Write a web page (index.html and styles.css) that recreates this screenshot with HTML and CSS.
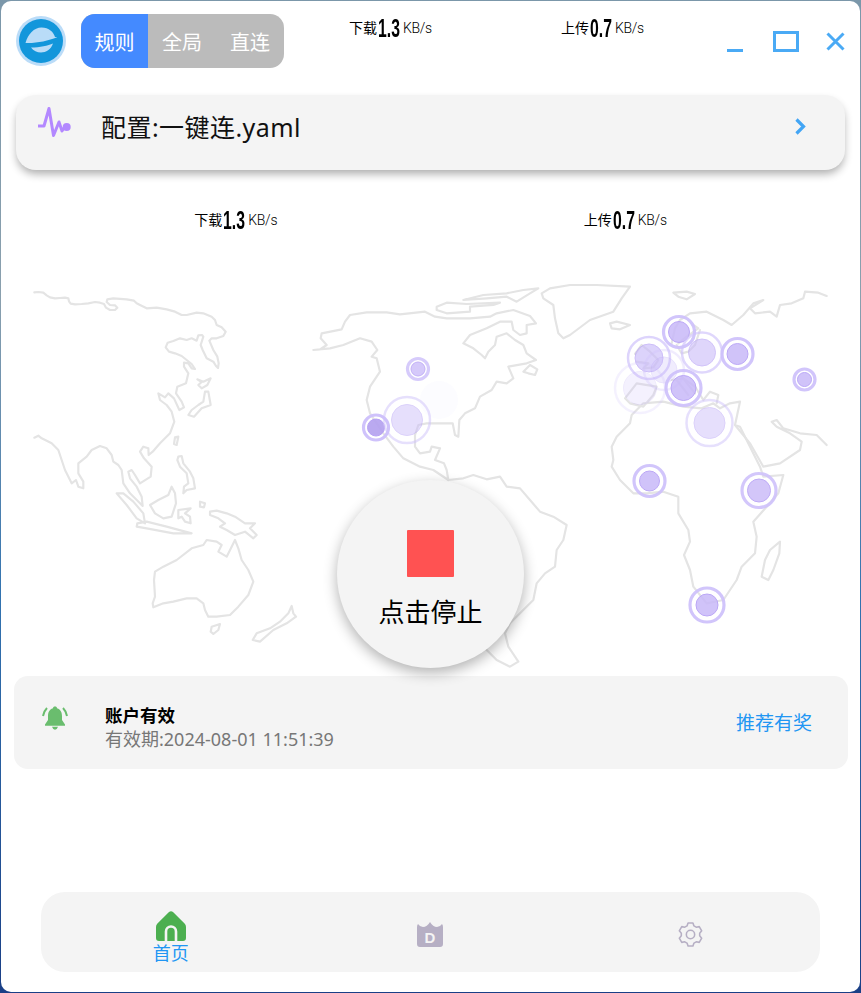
FILE: index.html
```html
<!DOCTYPE html>
<html lang="zh-CN">
<head>
<meta charset="utf-8">
<title>一键连</title>
<link rel="stylesheet" href="styles.css">
</head>
<body>
<div class="window">
  <header class="titlebar">
    <svg class="logo" viewBox="0 0 50 50">
      <circle cx="25" cy="25" r="25" fill="#bbdcf8"/>
      <circle cx="25" cy="25" r="22" fill="#1296db"/>
      <path d="M9.500 27 C12 18 18 11.500 25.500 11.500 C33 11.500 37.500 16 39 21 C41 20.800 41 21 41 21.300 C32 25 20 27.500 9.500 27Z" fill="#b9dcf8"/>
      <path d="M15 31.500 C24 31.500 32 29.500 37 27.500 C35 33.500 30 36.500 25 36.500 C21 36.500 17.500 35 15 31.500Z" fill="#b9dcf8"/>
    </svg>
    <div class="segment">
      <span class="seg seg-on">规则</span>
      <span class="seg">全局</span>
      <span class="seg">直连</span>
    </div>
    <div class="top-speeds">
      <div class="speed"><span class="sp-label">下载</span><b class="sp-num">1.3</b><span class="sp-unit">KB/s</span></div>
      <div class="speed"><span class="sp-label">上传</span><b class="sp-num">0.7</b><span class="sp-unit">KB/s</span></div>
    </div>
    <div class="win-controls">
      <svg class="win-min" viewBox="0 0 16 3"><rect width="16" height="3" fill="#4aaaf5"/></svg>
      <svg class="win-max" viewBox="0 0 26 21"><rect x="1.500" y="1.500" width="23" height="18" fill="none" stroke="#4aaaf5" stroke-width="3"/></svg>
      <svg class="win-close" viewBox="0 0 19 19"><path d="M1.500 1.500 L17.500 17.500 M17.500 1.500 L1.500 17.500" stroke="#4aaaf5" stroke-width="3" fill="none"/></svg>
    </div>
  </header>

  <section class="config">
    <svg class="pulse" viewBox="0 0 33 30">
      <path d="M0 19 H6 L11 1.500 L15.500 28.500 L21 15 L24 24 L27 19.500" fill="none" stroke="#b388ff" stroke-width="3" stroke-linejoin="round" stroke-linecap="round"/>
      <circle cx="28.700" cy="20" r="4" fill="#b388ff"/>
    </svg>
    <span class="config-name">配置:一键连.yaml</span>
    <svg class="chevron" viewBox="0 0 11 17"><path d="M1.500 1.500 L8.500 8.500 L1.500 15.500" fill="none" stroke="#42a5f5" stroke-width="3.200"/></svg>
  </section>

  <div class="speeds">
    <div class="speed"><span class="sp-label">下载</span><b class="sp-num">1.3</b><span class="sp-unit">KB/s</span></div>
    <div class="speed"><span class="sp-label">上传</span><b class="sp-num">0.7</b><span class="sp-unit">KB/s</span></div>
  </div>

  <div class="stage">
    <svg class="map" viewBox="1 270 859 400">
      <g class="land" transform="translate(0 270) scale(.33333)">
        <path d="M103 67 L115 66 L130 68 L140 76 L150 82 L165 85 L180 84 L195 83 L205 85 L207 94 L212 101 L225 103 L245 102 L265 100 L285 96 L300 98 L312 102 L318 113 L330 120 L345 120 L352 113 L345 106 L330 105 L320 96 L322 88 L340 85 L380 88 L402 92 L410 100 L420 105 L440 115 L470 113 L500 118 L525 125 L545 135 L560 135 L590 128 L610 130 L635 140 L645 150 L650 165 L665 172 L677 185 L670 198 L650 205 L635 205 L628 212 L640 240 L652 260 L656 280 L654 294 L648 288 L640 275 L620 265 L608 240 L602 225 L610 200 L606 195 L595 196 L590 212 L575 205 L560 210 L540 205 L520 213 L503 218 L497 232 L507 245 L525 250 L545 258 L560 270 L575 282 L585 297 L575 295 L565 280 L552 278 L552 290 L565 310 L558 340 L532 350 L528 370 L545 395 L552 412 L538 420 L522 385 L505 370 L495 382 L475 370 L480 390 L500 405 L515 425 L523 455 L510 490 L480 520 L458 545 L446 555 L445 535 L430 530 L420 545 L432 565 L455 590 L452 620 L420 640 L405 615 L395 600 L385 605 L390 625 L410 650 L425 680 L428 708 L420 700 L390 670 L370 640 L365 600 L355 585 L340 575 L335 555 L320 535 L300 528 L275 540 L260 560 L235 580 L235 610 L250 635 L250 655 L235 650 L228 630 L215 640 L195 600 L175 540 L155 520 L125 505 L115 497 L103 503"/>
        <path d="M592 328 L610 335 L632 325 L622 345 L605 355 L595 345 L605 336Z"/>
        <path d="M615 365 L625 365 L632 405 L605 415 L582 440 L565 435 L575 420 L595 405 L610 395Z"/>
        <path d="M525 502 L535 500 L530 525 L522 522Z"/>
        <path d="M535 560 L545 558 L550 580 L570 605 L580 625 L585 655 L560 660 L550 670 L552 650 L565 640 L560 610 L540 590 L532 570Z"/>
        <path d="M515 650 L525 670 L528 700 L515 740 L490 745 L465 730 L450 705 L475 690 L505 675Z"/>
        <path d="M535 720 L572 715 L555 730 L570 740 L572 760 L555 755 L545 740 L535 745Z"/>
        <path d="M600 695 L615 700 L612 712 L600 710Z"/>
        <path d="M350 670 L370 670 L400 695 L430 730 L435 760 L410 745 L380 705Z"/>
        <path d="M412 760 L440 755 L500 770 L575 790 L520 790 L440 775 L410 770Z"/>
        <path d="M630 725 L650 722 L680 730 L705 740 L735 760 L765 760 L750 775 L770 795 L760 805 L735 785 L705 795 L680 780 L660 770 L675 760 L655 745 L630 735Z"/>
        <path d="M465 905 L490 890 L530 870 L575 835 L610 825 L620 810 L650 815 L665 825 L655 845 L680 860 L695 830 L705 810 L715 835 L725 870 L745 900 L760 935 L745 975 L715 1010 L690 1035 L650 1040 L625 1040 L615 1020 L610 1000 L590 985 L560 985 L520 995 L490 1000 L460 1012 L458 1000 L465 980 L462 930Z"/>
        <path d="M635 1070 L660 1062 L655 1080 L640 1092 L632 1085Z"/>
        <path d="M875 1008 L880 1030 L888 1040 L860 1060 L820 1080 L780 1115 L758 1110 L770 1090 L810 1075 L840 1055 L865 1030Z"/>
      </g>
      <g class="land" transform="translate(300 280) scale(.33333)">
        <path d="M445 600 L440 570 L432 550 L405 540 L420 505 L395 500 L390 515 L360 520 L345 500 L345 465 L355 435 L380 430 L420 430 L458 430 L465 465 L475 470 L478 420 L495 400 L525 385 L540 350 L575 330 L590 305 L620 310 L640 295 L625 260 L680 250 L708 240 L680 220 L670 195 L645 180 L620 160 L590 170 L585 195 L565 215 L555 235 L545 225 L520 205 L490 190 L510 165 L560 145 L600 125 L635 125 L640 150 L660 165 L680 160 L680 135 L708 130 L690 108 L640 90 L590 100 L570 110 L510 115 L440 115 L405 110 L375 95 L300 103 L260 97 L200 97 L150 105 L135 125 L125 148 L65 160 L62 175 L80 195 L60 208 L40 210 L90 205 L130 195 L180 175 L215 185 L232 210 L215 230 L230 235 L240 275 L210 320 L200 360 L210 400 L250 460 L280 500 L310 535 L360 560 L400 570 L445 600"/>
        <path d="M490 60 L550 45 L620 40 L670 30 L715 25 L690 40 L650 65 L620 50 L560 55Z"/>
        <path d="M410 80 L440 68 L500 72 L600 68 L580 75 L510 80 L510 95 L440 100 L410 90Z"/>
        <path d="M670 275 L690 255 L712 268 L705 285 L685 280Z"/>
      </g>
      <g class="land" transform="translate(430 270) scale(.33333)">
        <path d="M54 630 L100 625 L130 615 L170 628 L210 620 L230 650 L270 655 L300 690 L330 725 L370 740 L410 765 L400 810 L380 840 L375 890 L345 910 L320 940 L310 990 L270 1030 L240 1060 L225 1090 L235 1130 L265 1175 L240 1190 L200 1170 L170 1140"/>
        <path d="M335 70 L360 55 L420 45 L500 45 L600 50 L575 85 L550 125 L480 150 L420 195 L400 205 L385 190 L375 145 L370 105 L340 85Z"/>
        <path d="M540 160 L560 155 L600 165 L570 178 L545 175Z"/>
        <path d="M730 68 L770 65 L795 72 L770 88 L745 80Z"/>
        <path d="M1050 815 L1048 850 L1030 900 L1015 930 L995 920 L1005 870 L1020 840Z"/>
        <path d="M605 435 L600 460 L560 500 L545 530 L550 570 L545 590 L570 630 L610 670 L650 670 L700 665 L745 680 L745 730 L775 780 L780 815 L762 855 L780 900 L790 950 L830 1000 L880 990 L920 930 L935 890 L975 850 L980 800 L970 755 L1010 710 L1045 670 L1060 615 L1000 620 L990 590 L960 530 L930 470 L915 465 L930 395 L900 400 L870 415 L850 400 L815 415 L760 410 L700 395 L640 400 L605 435"/>
        <path d="M915 465 L960 520 L1000 590 L1050 580 L1110 540 L1115 515 L1080 490 L1040 470 L1025 455 L1040 450 L1060 475 L1110 490 L1160 495 L1190 525"/>
        <path d="M1190 78 L1165 68 L1125 65 L1120 85 L1085 100 L1050 105 L1040 140 L1020 125 L975 130 L960 115 L1000 90 L970 100 L940 135 L905 165 L880 150 L830 125 L780 130 L750 150 L735 175 L725 220"/>
        <path d="M745 220 L770 200 L805 175 L790 165"/>
      </g>
      <g class="land" transform="translate(600 280) scale(.33333)">
        <path d="M105 222 L125 195 L150 215 L175 240 L160 262 L130 265 L145 250 L110 245"/>
        <path d="M75 355 L110 310 L170 320 L160 345 L130 380 L90 370Z"/>
        <path d="M215 300 L250 295 L285 320 L310 360 L330 335 L355 345 L350 370"/>
        <path d="M230 195 L245 220 L265 215 L285 195 L300 150"/>
        <path d="M230 300 L265 345 M245 290 L285 340"/>
      </g>
      <g class="pin">
        <circle class="halo" cx="439" cy="400" r="19" opacity=".02"/>
        <g opacity=".95"><circle class="ring thick" cx="679" cy="332" r="15.500"/><circle class="dot" cx="679" cy="332" r="10.500"/></g>
        <g opacity=".65"><circle class="ring" cx="702" cy="352.500" r="20"/><circle class="dot" cx="702" cy="352.500" r="13.500"/></g>
        <g opacity=".95"><circle class="ring thick" cx="737.500" cy="354" r="15.500"/><circle class="dot" cx="737.500" cy="354" r="10.500"/></g>
        <g opacity=".95"><circle class="ring thick" cx="804.500" cy="379.500" r="10.500"/><circle class="dot" cx="804.500" cy="379.500" r="7"/></g>
        <g opacity=".7"><circle class="ring" cx="649" cy="358" r="21"/><circle class="dot" cx="649" cy="358" r="14"/></g>
        <g opacity=".3"><circle class="ring" cx="664" cy="370" r="20"/><circle class="dot" cx="664" cy="370" r="13"/></g>
        <g opacity=".95"><circle class="ring thick" cx="683.500" cy="388" r="17.500"/><circle class="dot" cx="683.500" cy="388" r="12.500"/></g>
        <g opacity=".22"><circle class="ring" cx="640" cy="388" r="25"/><circle class="dot" cx="640" cy="388" r="16.500"/></g>
        <g opacity=".5"><circle class="ring" cx="709.500" cy="423" r="23"/><circle class="dot" cx="709.500" cy="423" r="15.500"/></g>
        <g opacity=".95"><circle class="ring thick" cx="649.500" cy="481" r="15.500"/><circle class="dot" cx="649.500" cy="481" r="10"/></g>
        <g opacity=".9"><circle class="ring thick" cx="759" cy="490.500" r="17"/><circle class="dot" cx="759" cy="490.500" r="11.500"/></g>
        <g opacity=".95"><circle class="ring thick" cx="707" cy="605" r="17"/><circle class="dot" cx="707" cy="605" r="11"/></g>
        <g opacity=".85"><circle class="ring thick" cx="418" cy="369" r="10.500"/><circle class="dot" cx="418" cy="369" r="7"/></g>
        <g><circle class="ring thick" cx="376" cy="427.500" r="12.500"/><circle class="dot deep" cx="376" cy="427.500" r="8.500"/></g>
        <g opacity=".5"><circle class="ring" cx="407" cy="420" r="23"/><circle class="dot" cx="407" cy="420" r="15.500"/></g>
      </g>
    </svg>
    <div class="stop">
      <span class="stop-square"></span>
      <span class="stop-label">点击停止</span>
    </div>
  </div>

  <section class="account">
    <svg class="bell" viewBox="0 0 26 25">
      <path d="M13 .5 C14.300 .5 15 1.200 15 2.200 C19 3.500 20 7 20 10 V14 L23 18.500 V19.800 H3 V18.500 L6 14 V10 C6 7 7 3.500 11 2.200 C11 1.200 11.700 .5 13 .5Z" fill="#6abd6e"/>
      <path d="M10 20.800 H16 Q15 23.800 13 23.800 Q11 23.800 10 20.800Z" fill="#6abd6e"/>
      <path d="M1 10 Q2 5 5 2 M25 10 Q24 5 21 2" fill="none" stroke="#6abd6e" stroke-width="2"/>
    </svg>
    <div class="account-text">
      <div class="account-title">账户有效</div>
      <div class="account-date">有效期:2024-08-01 11:51:39</div>
    </div>
    <span class="invite">推荐有奖</span>
  </section>

  <nav class="tabs">
    <div class="tab">
      <svg class="home" viewBox="0 0 30 30">
        <path d="M13 1 L1.200 12.800 Q0 14 0 16 V27 Q0 30 3 30 H27 Q30 30 30 27 V16 Q30 14 28.800 12.800 L17 1 Q15 -.6 13 1Z" fill="#4caf50"/>
        <path d="M10 30 V20.500 A5 5 0 0 1 20 20.500 V30" fill="none" stroke="#f4f4f4" stroke-width="2.600"/>
      </svg>
      <span class="tab-label">首页</span>
    </div>
    <div class="tab">
      <svg class="crown" viewBox="0 0 26 25">
        <path d="M1 2 Q3 5 6 5 Q10 5 13 0 Q16 5 20 5 Q23 5 25 2 Q26 3 26 5 V22 Q26 25 23 25 H3 Q0 25 0 22 V5 Q0 3 1 2Z" fill="#b6afc4"/>
        <text class="crown-d" x="13" y="21" text-anchor="middle">D</text>
      </svg>
    </div>
    <div class="tab">
      <svg class="gear" viewBox="0 0 24 24">
        <path d="M8.670 3.750 L9.650 .95 H14.350 L15.330 3.750 L17.480 4.990 L20.400 4.440 L22.750 8.510 L20.810 10.760 V13.240 L22.750 15.490 L20.400 19.560 L17.480 19.010 L15.330 20.250 L14.350 23.050 H9.650 L8.670 20.250 L6.520 19.010 L3.600 19.560 L1.250 15.490 L3.190 13.240 V10.760 L1.250 8.510 L3.600 4.440 L6.520 4.990Z" fill="none" stroke="#b6afc4" stroke-width="1.500" stroke-linejoin="round"/>
        <circle cx="12" cy="12" r="4" fill="none" stroke="#b6afc4" stroke-width="1.500"/>
      </svg>
    </div>
  </nav>
</div>
</body>
</html>
```

FILE: styles.css
```css
* { box-sizing: border-box; }
html, body { margin: 0; height: 993px; overflow: hidden; }
body {
  background: linear-gradient(180deg, #7b97aa 0, #8aa0ae 30%, #3273b0 60%, #1a3f86 100%);
  font-family: "Noto Sans", "Noto Sans CJK SC", sans-serif;
  padding: 1px;
}
.window {
  width: 859px;
  height: 991px;
  background: #fff;
  border-radius: 10px;
  display: flex;
  flex-direction: column;
}
.titlebar {
  height: 94px;
  flex: none;
  display: flex;
  align-items: flex-start;
  padding: 13px 15px 0;
}
.logo { width: 50px; height: 50px; margin-top: 2px; flex: none; }
.segment {
  display: flex;
  width: 203px;
  height: 54px;
  margin-left: 15px;
  border-radius: 14px;
  overflow: hidden;
  background: #bbb;
  color: #fff;
  font-size: 20px;
  flex: none;
}
.seg { flex: 1; display: flex; align-items: center; justify-content: center; }
.seg-on { flex: none; width: 67px; background: #448aff; }
.top-speeds { display: flex; gap: 129px; margin-left: 65px; margin-top: 2px; flex: none; }
.speed { display: flex; align-items: center; height: 24px; color: #000; white-space: nowrap; }
.sp-label { font-size: 14px; line-height: 24px; }
.sp-num {
  display: inline-block;
  width: 22px;
  margin-left: 1px;
  font-family: "Liberation Sans", sans-serif;
  font-size: 25px;
  font-weight: 700;
  line-height: 24px;
  transform: scaleX(.63);
  transform-origin: left center;
}
.sp-unit { font-family: Roboto, sans-serif; font-size: 14px; line-height: 24px; margin-left: 3px; font-weight: 300; letter-spacing: -.3px; }
.win-controls { position: relative; flex: 1; height: 60px; }
.win-min { position: absolute; width: 16px; height: 3px; right: 102px; top: 35px; }
.win-max { position: absolute; width: 26px; height: 21px; right: 46px; top: 17px; }
.win-close { position: absolute; width: 19px; height: 19px; right: 0; top: 18px; }
.config {
  height: 75px;
  flex: none;
  margin: 0 15px;
  background: #f4f4f4;
  border-radius: 20px;
  box-shadow: 0 5px 9px -1px rgba(0, 0, 0, .32);
  display: flex;
  align-items: flex-start;
  padding: 12px 39px 0 22px;
}
.pulse { width: 33px; height: 30px; flex: none; }
.config-name { font-size: 25px; line-height: 42px; margin-left: 30px; margin-top: -1px; letter-spacing: .45px; color: #111; flex: 1; }
.chevron { width: 11px; height: 17px; flex: none; margin-top: 11px; }
.speeds { display: flex; justify-content: space-around; padding: 0 40px; margin-top: 38px; height: 24px; flex: none; }
.stage { position: relative; margin-top: 38px; height: 400px; flex: none; }
.map { display: block; width: 859px; height: 400px; overflow: hidden; }
.land { filter: blur(.3px); }
.land path { fill: none; stroke: #e4e4e4; stroke-width: 6.500; stroke-linejoin: round; stroke-linecap: round; }
.ring { fill: none; stroke: #cfc2fb; stroke-width: 2.500; }
.ring.thick { stroke-width: 3.200; }
.dot { fill: #c9b9f8; fill-opacity: .9; stroke: #b7a2f5; stroke-width: 1; }
.dot.deep { fill: #b3a0ee; }
.halo { fill: #7c5ce8; }
.stop {
  position: absolute;
  left: 336px;
  top: 210px;
  width: 187px;
  height: 188px;
  border-radius: 50%;
  background: #f4f4f4;
  box-shadow: 0 5px 14px rgba(0, 0, 0, .3);
  display: flex;
  flex-direction: column;
  align-items: center;
  padding-top: 50px;
}
.stop-square { width: 47px; height: 47px; background: #ff5252; border-radius: 1px; flex: none; }
.stop-label { font-size: 26px; line-height: 38px; margin-top: 16px; color: #000; }
.account {
  height: 93px;
  flex: none;
  margin: 6px 12px 0 13px;
  background: #f4f4f4;
  border-radius: 14px;
  display: flex;
  align-items: flex-start;
  padding: 30px 36px 0 28px;
}
.bell { width: 26px; height: 25px; flex: none; }
.account-text { margin-left: 37px; flex: 1; margin-top: -3px; }
.account-title { font-size: 17.500px; font-weight: 700; line-height: 24px; color: #000; }
.account-date { font-size: 18px; line-height: 24px; color: #777; }
.invite { font-size: 19px; line-height: 28px; color: #2196f3; margin-top: 3px; }
.tabs {
  height: 80px;
  flex: none;
  margin: auto 40px 20px;
  background: #f4f4f4;
  border-radius: 24px;
  display: grid;
  grid-template-columns: repeat(3, 1fr);
}
.tab { display: flex; flex-direction: column; align-items: center; justify-content: center; }
.home { width: 30px; height: 30px; margin-top: 18px; flex: none; }
.tab-label { font-size: 18px; line-height: 24px; color: #2196f3; margin-bottom: 6px; }
.crown { width: 26px; height: 25px; margin-top: 5px; }
.crown-d { font-family: "Liberation Sans", sans-serif; font-size: 15px; font-weight: 700; fill: #f4f4f4; }
.gear { width: 25px; height: 25px; margin-top: 4px; }
```
